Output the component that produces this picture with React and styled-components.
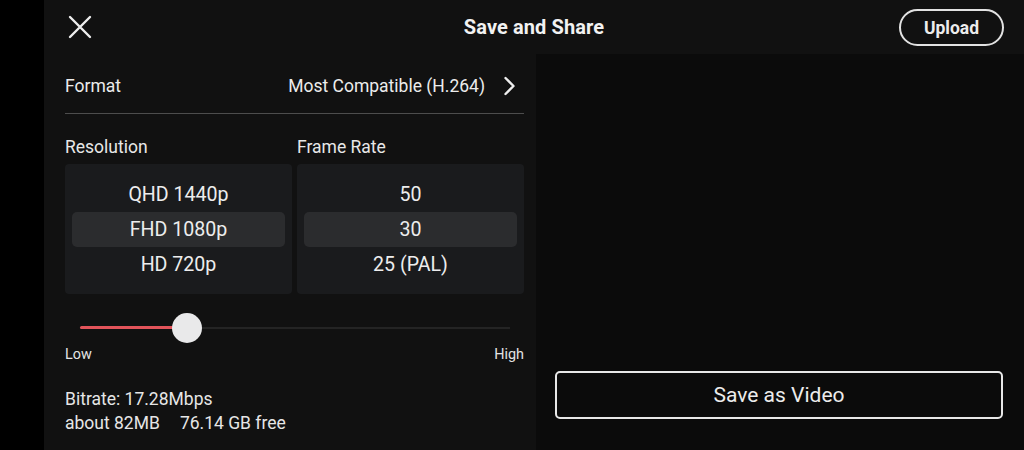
import React from "react";
import styled, { createGlobalStyle } from "styled-components";

const Global = createGlobalStyle`
  html, body { margin: 0; padding: 0; background: #000; }
  body { font-family: Roboto, "Noto Sans", "Liberation Sans", sans-serif; color: #ececec; }
  * { box-sizing: border-box; }
`;

const Screen = styled.div`
  width: 1024px;
  height: 450px;
  display: flex;
  background: #000;
  overflow: hidden;
`;

const SideStrip = styled.div`
  width: 44px;
  flex: none;
  background: #000;
`;

const Main = styled.div`
  flex: 1;
  display: flex;
  flex-direction: column;
  background: #111111;
`;

const Header = styled.header`
  height: 54px;
  flex: none;
  display: grid;
  grid-template-columns: 1fr auto 1fr;
  align-items: center;
  padding: 0 20px 0 24px;
`;

const IconButton = styled.button`
  justify-self: start;
  background: none;
  border: none;
  padding: 0;
  width: 24px;
  height: 24px;
  display: flex;
  align-items: center;
  justify-content: center;
  color: #eee;
  margin-top: -1px;
`;

const Title = styled.h1`
  margin: 0;
  font-size: 20px;
  font-weight: 700;
  color: #f2f2f2;
  letter-spacing: 0.1px;
  margin-left: -4px;
`;

const PillButton = styled.button`
  justify-self: end;
  height: 37px;
  width: 105px;
  border: 2px solid #e2e2e2;
  border-radius: 19px;
  background: transparent;
  color: #ececec;
  font-family: inherit;
  font-size: 17.5px;
  font-weight: 700;
  margin-top: 1px;
`;

const Body = styled.div`
  flex: 1;
  display: grid;
  grid-template-columns: 492px 1fr;
`;

const Settings = styled.section`
  padding: 0 12px 0 21px;
  display: flex;
  flex-direction: column;
`;

const FormatRow = styled.div`
  height: 60px;
  display: flex;
  align-items: center;
  justify-content: space-between;
  padding-top: 4px;
  border-bottom: 1px solid #4d4d4d;
  font-size: 17.5px;
`;

const FormatValue = styled.div`
  display: flex;
  align-items: center;
  gap: 18px;
  padding-right: 8px;
`;

const Columns = styled.div`
  display: grid;
  grid-template-columns: 1fr 1fr;
  gap: 5px;
  margin-top: 23px;
`;

const Column = styled.div`
  display: flex;
  flex-direction: column;
`;

const Label = styled.div`
  font-size: 17.5px;
  line-height: 20px;
  color: #e8e8e8;
  margin-bottom: 7px;
`;

const Picker = styled.div`
  height: 130px;
  background: #1a1b1d;
  border-radius: 4px;
  padding: 13px 7px 12px;
  display: flex;
  flex-direction: column;
`;

const PickerItem = styled.div`
  height: 35px;
  display: flex;
  align-items: center;
  justify-content: center;
  font-size: 19.6px;
  color: #ededed;
  border-radius: 5px;
  background: ${(p) => (p.$selected ? "#2b2c2e" : "transparent")};
`;

const SliderWrap = styled.div`
  margin-top: 19px;
  padding: 0 14px 0 15px;
`;

const Track = styled.div`
  position: relative;
  height: 30px;
  display: flex;
  align-items: center;
`;

const Rail = styled.div`
  width: 100%;
  height: 2px;
  background: #242424;
`;

const Fill = styled.div`
  position: absolute;
  left: 0;
  top: 13px;
  height: 3px;
  background: #e2545a;
  border-radius: 2px;
`;

const Thumb = styled.div`
  position: absolute;
  top: 0;
  width: 30px;
  height: 30px;
  margin-left: -15px;
  border-radius: 50%;
  background: #e9e9ea;
`;

const Ends = styled.div`
  display: flex;
  justify-content: space-between;
  margin-top: 4px;
  font-size: 14.4px;
  line-height: 16px;
  color: #e4e4e4;
`;

const Info = styled.div`
  margin-top: 24px;
  font-size: 17.5px;
  line-height: 24px;
  color: #e6e6e6;
  display: flex;
  flex-direction: column;
`;

const InfoLine = styled.div`
  display: flex;
  gap: 20px;
`;

const Preview = styled.section`
  background: #0b0b0b;
  display: flex;
  flex-direction: column;
  justify-content: flex-end;
  padding: 0 21px 31px 19px;
`;

const SaveButton = styled.button`
  height: 48px;
  width: 100%;
  background: transparent;
  border: 2px solid #e8e8e8;
  border-radius: 5px;
  color: #ececec;
  font-family: inherit;
  font-size: 21px;
  padding: 0;
`;

const value = 24.9;

export default function App() {
  return (
    <>
      <Global />
      <Screen>
        <SideStrip />
        <Main>
          <Header>
            <IconButton aria-label="Close">
              <svg width="24" height="24" viewBox="0 0 24 24" fill="none" stroke="#eee" strokeWidth="2.4" strokeLinecap="round">
                <path d="M2 2 L22 22 M22 2 L2 22" />
              </svg>
            </IconButton>
            <Title>Save and Share</Title>
            <PillButton>Upload</PillButton>
          </Header>
          <Body>
            <Settings>
              <FormatRow>
                <span>Format</span>
                <FormatValue>
                  <span>Most Compatible (H.264)</span>
                  <svg width="13" height="20" viewBox="0 0 13 20" fill="none" stroke="#eee" strokeWidth="2.4" strokeLinecap="round" strokeLinejoin="round">
                    <path d="M2.5 2 L10.5 10 L2.5 18" />
                  </svg>
                </FormatValue>
              </FormatRow>
              <Columns>
                <Column>
                  <Label>Resolution</Label>
                  <Picker>
                    <PickerItem>QHD 1440p</PickerItem>
                    <PickerItem $selected>FHD 1080p</PickerItem>
                    <PickerItem>HD 720p</PickerItem>
                  </Picker>
                </Column>
                <Column>
                  <Label>Frame Rate</Label>
                  <Picker>
                    <PickerItem>50</PickerItem>
                    <PickerItem $selected>30</PickerItem>
                    <PickerItem>25 (PAL)</PickerItem>
                  </Picker>
                </Column>
              </Columns>
              <SliderWrap>
                <Track>
                  <Rail />
                  <Fill style={{ width: `${value}%` }} />
                  <Thumb style={{ left: `${value}%` }} />
                </Track>
              </SliderWrap>
              <Ends>
                <span>Low</span>
                <span>High</span>
              </Ends>
              <Info>
                <span>Bitrate: 17.28Mbps</span>
                <InfoLine>
                  <span>about 82MB</span>
                  <span>76.14 GB free</span>
                </InfoLine>
              </Info>
            </Settings>
            <Preview>
              <SaveButton>Save as Video</SaveButton>
            </Preview>
          </Body>
        </Main>
      </Screen>
    </>
  );
}
